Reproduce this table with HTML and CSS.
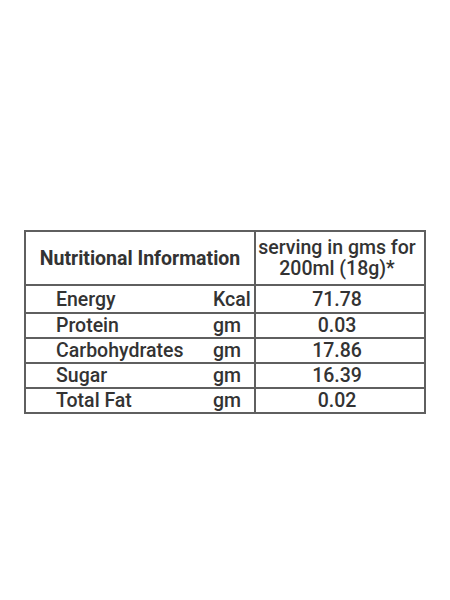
FILE: index.html
```html
<!DOCTYPE html>
<html>
    <head>
        <link rel="stylesheet" href="styles.css">
    </head>
    <body>
    <table class="nutrition">
        <colgroup>
            <col class="col-name">
            <col class="col-unit">
            <col class="col-value">
        </colgroup>
        <tr class="head">
            <th colspan="2">Nutritional Information</th>
            <td class="value serving">serving in gms for<br>200ml (18g)*</td>
        </tr>
        <tr class="first">
            <td class="name">Energy</td>
            <td class="unit">Kcal</td>
            <td class="value">71.78</td>
        </tr>
        <tr>
            <td class="name">Protein</td>
            <td class="unit">gm</td>
            <td class="value">0.03</td>
        </tr>
        <tr>
            <td class="name">Carbohydrates</td>
            <td class="unit">gm</td>
            <td class="value">17.86</td>
        </tr>
        <tr>
            <td class="name">Sugar</td>
            <td class="unit">gm</td>
            <td class="value">16.39</td>
        </tr>
        <tr>
            <td class="name">Total Fat</td>
            <td class="unit">gm</td>
            <td class="value">0.02</td>
        </tr>
    </table>
    </body>
</html>
```

FILE: styles.css
```css
body {
    margin: 0;
    background-color: white;
    font-family: Roboto, "DejaVu Sans", sans-serif;
    color: #333;
}
.nutrition {
    width: 402px;
    margin: 230px 0 0 24px;
    border-collapse: collapse;
    table-layout: fixed;
    border: 2px solid #5f5f5f;
    font-size: 19.5px;
    font-weight: 500;
}
.col-name {
    width: 188px;
}
.col-unit {
    width: 42px;
}
.nutrition td,
.nutrition th {
    padding: 0;
    line-height: 21px;
}
.nutrition tr {
    border-bottom: 2px solid #5f5f5f;
}
.nutrition tr td {
    height: 23px;
}
.nutrition .first td {
    height: 26px;
}
.nutrition .head td,
.head th {
    height: 52px;
}
.head th {
    font-weight: bold;
    text-align: center;
}
.name {
    padding-left: 30px !important;
}
.value {
    text-align: center;
    border-left: 2px solid #5f5f5f;
    padding-right: 6px !important;
}
```
